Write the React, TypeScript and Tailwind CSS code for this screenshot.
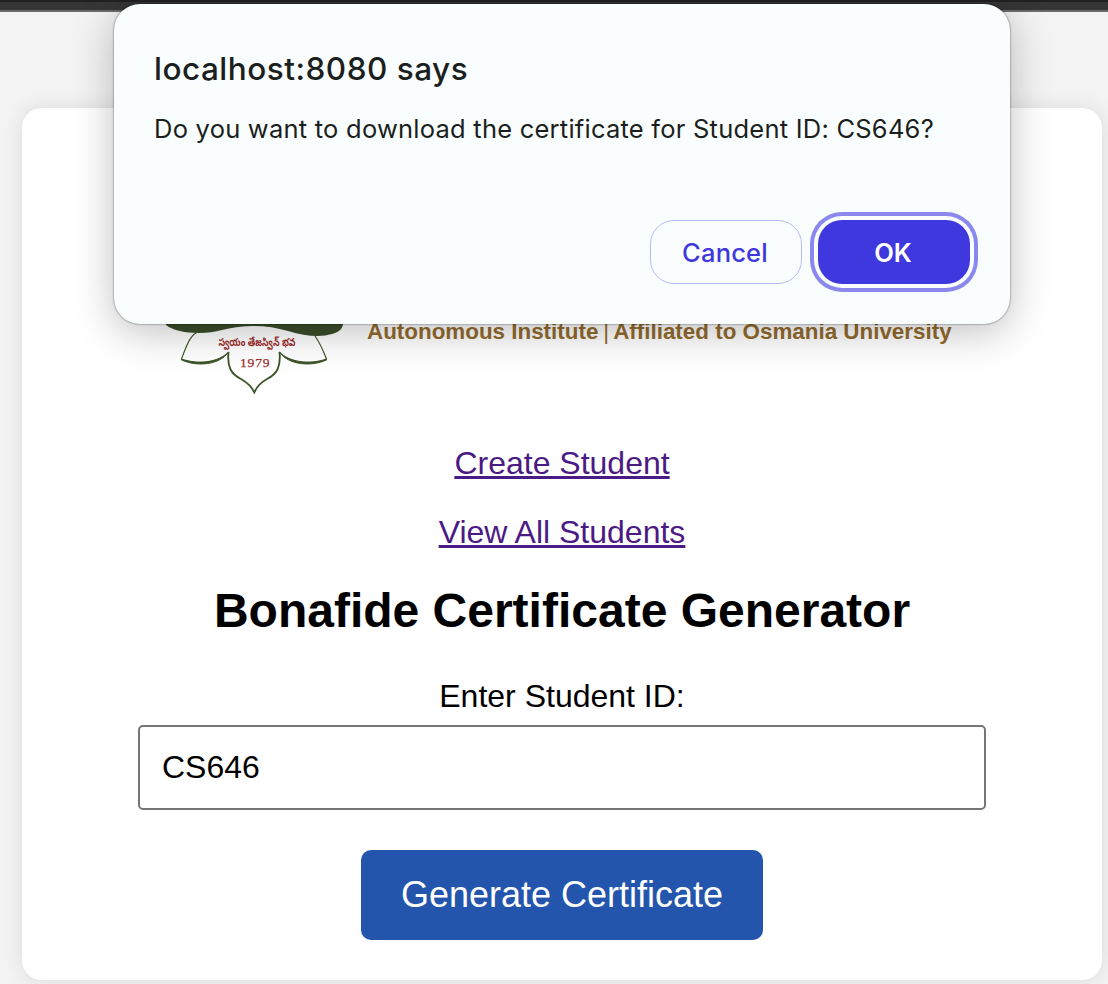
function Crest() {
  return (
    <svg className="block h-[94px] w-[180px]" viewBox="164 300 180 94" fill="none">
      <path
        d="M166 300 V325 C177 334 205 335 222 330 C246 324 268 325 288 331 C307 337 322 337 332 334 C339 332 343 329 343 323 V300 Z"
        fill="#3a4e2a"
      />
      <g stroke="#3c5428" strokeWidth="1.2" strokeLinecap="round">
        <path d="M196 333 C190 336 186 347 181.500 359" />
        <path d="M315 336 C320 343 323 350 326.500 359" />
      </g>
      <path d="M181.500 359 C199 365 219 362 228.500 352 C220 365 197 367 181.500 360Z" fill="#3c5428" stroke="#3c5428" strokeWidth="1" />
      <path d="M326.500 359 C309 365 289 362 279.500 352 C288 365 311 367 326.500 360Z" fill="#3c5428" stroke="#3c5428" strokeWidth="1" />
      <path
        d="M228.500 352 C227 367 231 374 241 379 C248 383 252 387 254.300 392.500 C256.500 387 260 383 267 379 C277 374 281 367 279.500 352"
        stroke="#3c5428"
        strokeWidth="1.8"
      />
      <text
        x="218.500"
        y="345.500"
        fontSize="11"
        fontWeight="700"
        fill="#9d2b2b"
        textLength="77"
        lengthAdjust="spacingAndGlyphs"
        fontFamily="'Noto Sans Telugu', 'Noto Sans', sans-serif"
      >
        స్వయం తేజస్విన్ భవ
      </text>
      <text
        x="240"
        y="367.300"
        fontSize="13.500"
        fill="#9d2b2b"
        stroke="#9d2b2b"
        strokeWidth="0.25"
        textLength="29.500"
        fontFamily="'Liberation Serif', serif"
      >
        1979
      </text>
    </svg>
  );
}

function Dialog() {
  return (
    <div
      role="dialog"
      className="absolute top-1 left-[114px] flex h-80 w-[896px] flex-col rounded-[26px] bg-[#fafdfe] px-10 pt-[45px] font-['Inter','Noto_Sans',sans-serif] text-[#1b1f20] shadow-[0_0_2px_rgba(0,0,0,0.65),0_8px_40px_rgba(0,0,0,0.25)]"
    >
      <h1 className="h-10 text-[31.5px] leading-10 font-medium tracking-[0.5px] whitespace-nowrap">
        localhost:8080 says
      </h1>
      <p className="mt-5 h-10 text-[25.5px] leading-10 tracking-[0.232px] whitespace-nowrap">
        Do you want to download the certificate for Student ID: CS646?
      </p>
      <div className="mt-[71px] flex justify-end gap-4">
        <button className="h-16 w-[152px] rounded-[24px] border border-[#b9bcf5] pt-[3px] pr-[2px] text-[25.5px] font-medium tracking-[0.2px] text-[#3f36dc]">
          Cancel
        </button>
        <button className="h-16 w-[152px] rounded-[24px] bg-[#3f38df] pt-[3px] pr-0.5 text-[25.5px] font-semibold text-white ring-4 ring-[#8b88ed] ring-offset-4 ring-offset-[#fafdfe]">
          OK
        </button>
      </div>
    </div>
  );
}

export default function App() {
  return (
    <div className="relative h-[984px] w-[1108px] overflow-hidden bg-[#f3f3f3] font-['Liberation_Sans',Arial,sans-serif] text-black">
      <div className="h-0.5 bg-[#212124]" />
      <div className="h-2 bg-[#363636]" />
      <div className="h-0.5 bg-[#6b6969]" />
      <main className="mt-24 ml-[22px] flex h-[872px] w-[1080px] flex-col items-center rounded-[20px] bg-white shadow-[0_0_20px_rgba(0,0,0,0.1)]">
        <header className="mt-48 flex h-[94px] w-full pl-[142px]">
          <Crest />
          <p className="mt-[18px] ml-[23px] flex text-[22.4px] leading-7 font-bold whitespace-nowrap text-[#936b2e]">
            <span>Autonomous Institute</span>
            <span className="mr-1 ml-[5px] font-normal">|</span>
            <span>Affiliated to Osmania University</span>
          </p>
        </header>
        <a className="mt-[51px] text-[32px] leading-9 text-[#4b1a84] underline">Create Student</a>
        <a className="mt-[33px] text-[32px] leading-9 text-[#4b1a84] underline">View All Students</a>
        <h2 className="mt-[34px] text-[48px] leading-[54px] font-bold">Bonafide Certificate Generator</h2>
        <label htmlFor="student" className="mt-10 text-[32px] leading-9">
          Enter Student ID:
        </label>
        <input
          id="student"
          defaultValue="CS646"
          className="mt-[11px] h-[85px] w-[848px] shrink-0 rounded-[5px] border-2 border-[#767676] bg-white px-[22px] text-[32px]"
        />
        <button className="mt-10 h-[90px] w-[402px] shrink-0 rounded-[10px] bg-[#2455ac] text-[36px] text-white">
          Generate Certificate
        </button>
      </main>
      <Dialog />
    </div>
  );
}
